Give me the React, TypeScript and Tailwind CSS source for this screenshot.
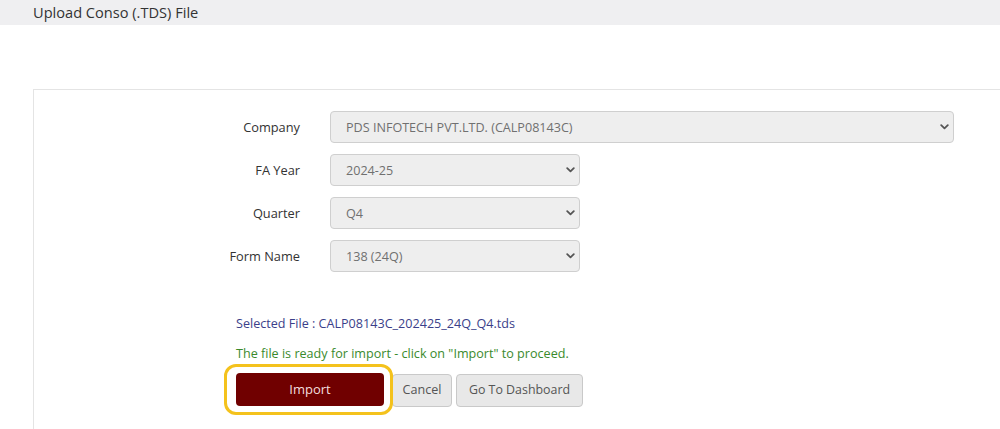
import React from "react";

const Chevron = () => (
  <svg width="9" height="6" viewBox="0 0 9 6" className="shrink-0">
    <path d="M1.2 1.2 L4.5 4.4 L7.8 1.2" fill="none" stroke="#555" strokeWidth="1.8" strokeLinecap="round" strokeLinejoin="round" />
  </svg>
);

const SelectBox = ({ value, wide }: { value: string; wide?: boolean }) => (
  <div
    className={`flex h-[32px] items-center justify-between rounded-[4px] border border-[#cfcfcf] bg-[#eeeeee] pl-[15px] pr-[4px] text-[12.6px] text-[#707070] ${
      wide ? "w-[624px]" : "w-[250px]"
    }`}
  >
    <span className="pt-[2px]">{value}</span>
    <Chevron />
  </div>
);

const Row = ({ label, value, wide, first }: { label: string; value: string; wide?: boolean; first?: boolean }) => (
  <div className={`flex items-center ${first ? "" : "mt-[11px]"}`}>
    <div className="w-[266px] pt-[2px] text-right text-[12.8px] text-[#333]">{label}</div>
    <div className="ml-[30px]">
      <SelectBox value={value} wide={wide} />
    </div>
  </div>
);

export default function App() {
  return (
    <div className="h-[429px] w-[1000px] overflow-hidden bg-white" style={{ fontFamily: '"Open Sans", "Noto Sans", sans-serif' }}>
      <div className="h-[25px] bg-[#efeff1] pl-[33px] text-[14.6px] leading-[24px] text-[#333]">Upload Conso (.TDS) File</div>
      <div className="ml-[33px] mt-[64px] h-[400px] w-[1000px] border border-[#e4e4e4] pt-[21px]">
        <Row first label="Company" value="PDS INFOTECH PVT.LTD. (CALP08143C)" wide />
        <Row label="FA Year" value="2024-25" />
        <Row label="Quarter" value="Q4" />
        <Row label="Form Name" value="138 (24Q)" />
        <div className="ml-[202px] mt-[43px] text-[12.6px] leading-[18px] text-[#3b3f8a]">Selected File : CALP08143C_202425_24Q_Q4.tds</div>
        <div className="ml-[202px] mt-[12px] text-[12.6px] leading-[18px] text-[#3a8a2c]">The file is ready for import - click on "Import" to proceed.</div>
        <div className="ml-[202px] mt-[10px] flex items-start">
          <div className="relative">
            <div className="flex h-[33px] w-[148px] items-center justify-center rounded-[4px] bg-[#700000] text-[13px] text-[#f3dede]">Import</div>
            <div className="pointer-events-none absolute left-[-12px] top-[-9px] h-[51px] w-[169px] rounded-[12px] border-[3.5px] border-[#f4c21c]" />
          </div>
          <div className="ml-[8px] mt-[1px] flex h-[33px] w-[60px] items-center justify-center rounded-[4px] border border-[#c9c9c9] bg-[#e8e8e8] text-[12.6px] text-[#555]">Cancel</div>
          <div className="ml-[4px] mt-[1px] flex h-[33px] w-[127px] items-center justify-center rounded-[4px] border border-[#c9c9c9] bg-[#e8e8e8] text-[12.4px] text-[#555]">Go To Dashboard</div>
        </div>
      </div>
    </div>
  );
}
